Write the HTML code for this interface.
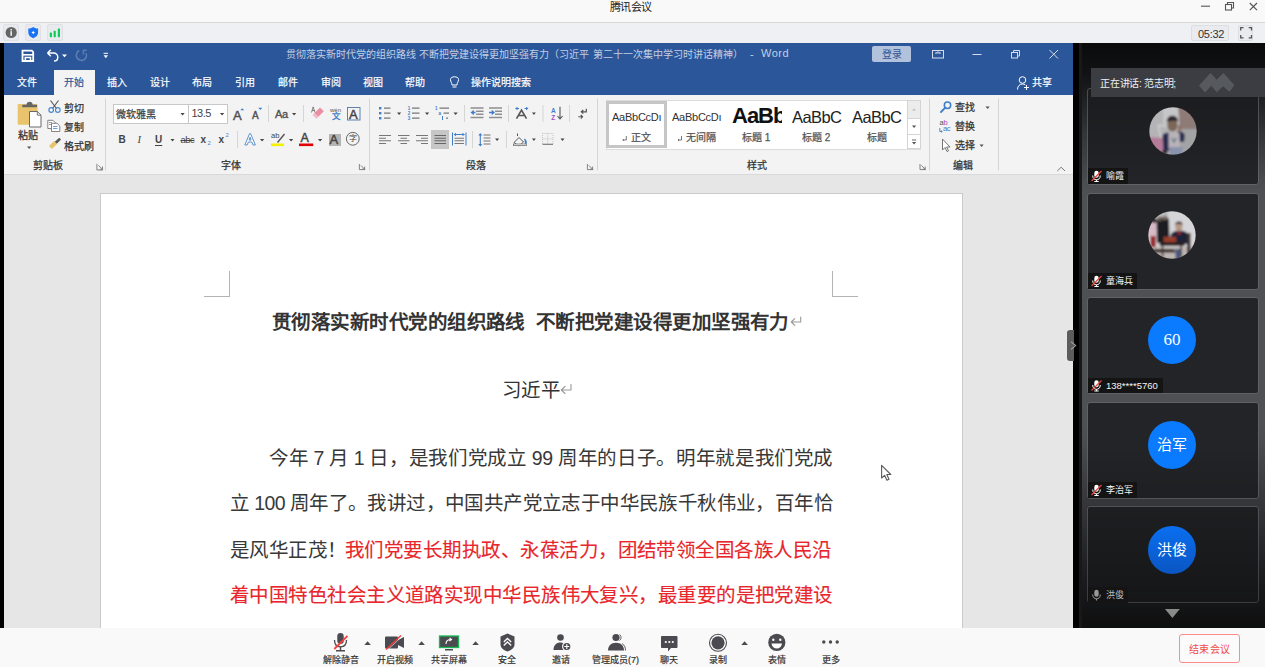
<!DOCTYPE html>
<html lang="zh-CN"><head><meta charset="utf-8">
<style>
*{margin:0;padding:0;box-sizing:border-box}
html,body{width:1265px;height:667px;overflow:hidden;background:#f9f9f9;font-family:"Liberation Sans",sans-serif;position:relative}
.a{position:absolute}
.t{position:absolute;white-space:nowrap;line-height:1}
svg{position:absolute;overflow:visible}
.ln{font-size:19.5px;line-height:1;color:#383838;white-space:nowrap;}
.red{color:#e8262b;-webkit-text-stroke:0.12px #e8262b}
.wt{top:50px;font-size:10px;color:#c3cfe3}
.rt{font-size:10px;color:#333;-webkit-text-stroke:0.25px currentColor}
.tile{position:absolute;left:1087px;width:172px;height:97px;background:#232427;border:1px solid #606266;border-radius:3px}
.av{position:absolute;left:1148px;width:48px;height:48px;border-radius:50%;color:#fff;font-size:15px;text-align:center;line-height:48px}
.nb{position:absolute;left:1087.5px;height:15.5px;background:#141415}
.nb span{position:absolute;left:18.5px;top:4px;font-size:9px;line-height:1;color:#f5f5f5;white-space:nowrap}
.bl{position:absolute;top:655.5px;font-size:9px;line-height:1;color:#333;white-space:nowrap;-webkit-text-stroke:0.2px currentColor}
.tab{top:78px;font-size:10px;color:#fff;-webkit-text-stroke:0.2px currentColor}
</style></head><body>
<!-- title bar -->
<div class="a" style="left:0;top:0;width:1265px;height:22px;background:#f9f9f9"></div>
<div class="t" style="left:610px;top:2px;font-size:11px;color:#222;letter-spacing:-0.6px">腾讯会议</div>
<div class="a" style="left:0;top:22px;width:1265px;height:1px;background:#d6d6d6"></div>
<!-- info strip -->
<div class="a" id="strip" style="left:0;top:23px;width:1265px;height:20px;background:#eef0f3"></div>

<!-- word window -->
<div class="a" style="left:0;top:43px;width:4px;height:585px;background:#000"></div>
<div class="a" id="wtitle" style="left:4px;top:43px;width:1069px;height:52px;background:#2b579a"></div>
<div class="a" id="ribbon" style="left:4px;top:95px;width:1069px;height:79px;background:#f3f3f3"></div>
<div class="a" style="left:4px;top:174px;width:1069px;height:1px;background:#d9d9d9"></div>
<div class="a" id="docarea" style="left:4px;top:175px;width:1069px;height:453px;background:#e6e6e6"></div>
<div class="a" id="page" style="left:100px;top:193px;width:863px;height:435px;background:#fff;border:1px solid #cacaca;border-bottom:none"></div>



<!-- title bar controls -->
<svg style="left:0;top:0" width="1" height="1"><g fill="none" stroke="#555" stroke-width="1.1">
<path d="M1201 6.2 H1210"/>
<rect x="1225.5" y="4.5" width="6" height="5.5"/><path d="M1227.5 4.5 V2.5 H1233.5 V8 H1231.5"/>
<path d="M1249.8 3 L1257 10.2 M1257 3 L1249.8 10.2" stroke-width="1.2"/>
</g></svg>
<!-- strip -->
<div class="a" style="left:3px;top:24px;width:16px;height:17px;background:#e8eaee;border:1px solid #dfe1e5;border-radius:2px"></div>
<div class="a" style="left:25px;top:24px;width:16px;height:17px;background:#e8eaee;border:1px solid #dfe1e5;border-radius:2px"></div>
<div class="a" style="left:47px;top:24px;width:16px;height:17px;background:#e8eaee;border:1px solid #dfe1e5;border-radius:2px"></div>
<svg style="left:0;top:0" width="1" height="1">
<circle cx="11.2" cy="32.5" r="5.6" fill="#656565"/><rect x="10.4" y="29" width="1.6" height="1.5" fill="#e8eaee"/><rect x="10.4" y="31.2" width="1.6" height="4.6" fill="#e8eaee"/>
<path d="M33.2 27 C31.5 28.2 30 28.5 28.3 28.6 V32.5 C28.3 35.5 30.8 37.3 33.2 38.2 C35.6 37.3 38.1 35.5 38.1 32.5 V28.6 C36.4 28.5 34.9 28.2 33.2 27Z" fill="#1a73f5"/>
<path d="M33.2 30.8 L34.2 32.6 L33.2 34.4 L32.2 32.6Z M31.4 32.6 L33.2 31.6 L35 32.6 L33.2 33.6Z" fill="#fff"/>
<rect x="49.8" y="32.6" width="2.2" height="4.6" rx="0.6" fill="#0bcf5a"/><rect x="53.6" y="30.8" width="2.2" height="6.4" rx="0.6" fill="#0bcf5a"/><rect x="57.8" y="28.4" width="2.2" height="8.8" rx="0.6" fill="#0bcf5a"/>
</svg>
<div class="a" style="left:1191px;top:25px;width:38px;height:16px;background:#e9ebef;border:1px solid #dcdee2;border-radius:2px"></div>
<div class="t" style="left:1198px;top:28.5px;font-size:11px;color:#333;letter-spacing:-0.3px">05:32</div>
<div class="a" style="left:1238px;top:25px;width:15px;height:16px;background:#e9ebef;border:1px solid #dcdee2;border-radius:2px"></div>
<svg style="left:0;top:0" width="1" height="1"><g fill="none" stroke="#555" stroke-width="1.3">
<path d="M1240.7 30.5 V27.7 H1243.5 M1248.7 27.7 H1251.5 V30.5 M1251.5 35 V37.8 H1248.7 M1243.5 37.8 H1240.7 V35"/></g></svg>

<!-- word title bar -->
<svg style="left:0;top:0" width="1" height="1">
<g fill="none" stroke="#fff" stroke-width="1.4">
<path d="M22.5 50.7 H31.8 L33.2 52.1 V61 H22.5Z" stroke-width="1.8"/><path d="M22.5 54.8 H33.2" stroke-width="1.6"/><path d="M25.3 61 V57.6 H30.5 V61" stroke-width="1.5"/>
<path d="M47.5 53 L50.8 49.8 M47.5 53 L50.8 56.2 M47.5 53 H53.5 C56.2 53 57.8 55 57.8 57.2 C57.8 59.3 56.2 61 54 61"/>
</g>
<path d="M62 54.5 H67 L64.5 57.2Z" fill="#fff"/>
<g fill="none" stroke="#5b7db3" stroke-width="1.6"><path d="M79.3 50.6 A5.1 5.1 0 1 0 86.1 53.2"/><path d="M83.4 54.6 V50.3 H86.8" stroke-width="1.5"/></g>
<path d="M103.6 53.3 H108" stroke="#fff" stroke-width="1"/><path d="M103.6 55.3 H108 L105.8 58.2Z" fill="#fff"/>
</svg>
<div class="t wt" style="left:286px">贯彻落实新时代党的组织路线</div><div class="t wt" style="left:419px">不断把党建设得更加坚强有力（习近平</div><div class="t wt" style="left:593px">第二十一次集中学习时讲话精神）</div><div class="t wt" style="left:750px;font-size:11px;top:49px">-</div><div class="t wt" style="left:761px;font-size:11px;top:48px;letter-spacing:0.5px">Word</div>
<div class="a" style="left:872px;top:46px;width:39px;height:16px;background:#b2c2dc;border-radius:2px"></div>
<div class="t" style="left:881.5px;top:50px;font-size:10px;color:#2f5597">登录</div>
<svg style="left:0;top:0" width="1" height="1"><g fill="none" stroke="#d5ddea" stroke-width="1">
<rect x="932.5" y="50.5" width="11" height="7.5"/><path d="M935 53 H941 M938 51.5 L936 53.5 M938 51.5 L940 53.5" stroke-width="0.9"/>
<path d="M972.5 54.5 H981.5"/>
<rect x="1011.5" y="52.5" width="6" height="5.5"/><path d="M1013.5 52.5 V50.5 H1019.5 V56 H1017.5"/>
<path d="M1049.5 50 L1058 58.5 M1058 50 L1049.5 58.5"/>
</g></svg>
<!-- tabs -->
<div class="a" style="left:54px;top:70px;width:41px;height:25px;background:#f3f3f3"></div>
<div class="t tab" style="left:17px">文件</div>
<div class="t tab" style="left:64px;color:#2b579a">开始</div>
<div class="t tab" style="left:107px">插入</div>
<div class="t tab" style="left:150px">设计</div>
<div class="t tab" style="left:192px">布局</div>
<div class="t tab" style="left:234.5px">引用</div>
<div class="t tab" style="left:277.5px">邮件</div>
<div class="t tab" style="left:320.5px">审阅</div>
<div class="t tab" style="left:362.5px">视图</div>
<div class="t tab" style="left:405px">帮助</div>
<div class="t tab" style="left:471px">操作说明搜索</div>
<svg style="left:0;top:0" width="1" height="1"><g fill="none" stroke="#fff" stroke-width="1">
<path d="M452 85 C452 82.5 450.5 82 450.5 79.5 C450.5 77.5 452.5 76.8 454.5 76.8 C456.5 76.8 458.5 77.5 458.5 79.5 C458.5 82 457 82.5 457 85Z"/><path d="M452.5 87 H456.5"/>
<circle cx="1022.5" cy="80" r="3.3"/><path d="M1017.5 89.5 C1017.5 86 1019.8 84 1022.5 84 C1023.5 84 1024.5 84.3 1025.3 84.8"/><path d="M1026.5 85 V90 M1024 87.5 H1029"/>
</g></svg>
<div class="t tab" style="left:1032px">共享</div>


<!-- ribbon: clipboard -->
<svg style="left:0;top:0" width="1" height="1">
<rect x="17.7" y="104" width="19.8" height="20.7" rx="1" fill="#eac46c"/>
<path d="M22.3 107.3 V104.8 H26.5 C26.5 102.4 28.7 101.8 29.6 101.8 C30.5 101.8 32.7 102.4 32.7 104.8 H37 V107.3Z" fill="#656565"/>
<path d="M29.5 111.5 H37.3 L41 115.2 V127 H29.5Z" fill="#fff" stroke="#6a6a6a" stroke-width="1"/><path d="M37.3 111.5 V115.2 H41" fill="none" stroke="#6a6a6a" stroke-width="0.9"/>
<path d="M27 146.5 H31.3 L29.15 149Z" fill="#555"/>
<g fill="none" stroke="#555" stroke-width="1.1"><path d="M50.5 100.5 L56.5 108.5 M58.5 100.5 L52.5 108.5"/></g>
<g fill="none" stroke="#4a8ad0" stroke-width="1.2"><circle cx="51.2" cy="110" r="2.3"/><circle cx="57.8" cy="110" r="2.3"/></g>
<g fill="#fff" stroke="#777" stroke-width="0.9"><path d="M47.8 120.3 H53 L55 122.3 V128.5 H47.8Z"/><path d="M51.5 123.3 H57 L59.8 126 V131.5 H51.5Z"/></g>
<path d="M53 126.5 H57.5 M53 128.5 H57.5" stroke="#4a8ad0" stroke-width="0.8"/><path d="M49 122.5 H52 M49 124.5 H52" stroke="#777" stroke-width="0.7"/>
<path d="M49 146 L54 141 L57 144 L52 149Z" fill="#eac46c"/><path d="M54.8 141.8 L59.2 137.8 L61 139.5 L56.8 143.7Z" fill="#555"/>
<path d="M96.9 163.8 V170 H103 M98.5 165.3 L102.5 169.3 M102.5 166.5 V169.3 H99.7" fill="none" stroke="#777" stroke-width="0.9"/>
<path d="M105.5 98.5 V170.5" stroke="#d5d5d5" stroke-width="1"/>
</svg>
<div class="t rt" style="left:17.5px;top:131px">粘贴</div>
<div class="t rt" style="left:64px;top:103.5px">剪切</div>
<div class="t rt" style="left:64px;top:122.5px">复制</div>
<div class="t rt" style="left:64px;top:141.5px">格式刷</div>
<div class="t rt" style="left:33px;top:160.5px">剪贴板</div>

<!-- ribbon: font -->
<div class="a" style="left:113px;top:104px;width:115px;height:20px;background:#fff;border:1px solid #c8c8c8"></div>
<div class="a" style="left:188px;top:104px;width:1px;height:20px;background:#c8c8c8"></div>
<div class="t rt" style="left:116px;top:109.5px;color:#444">微软雅黑</div>
<div class="t" style="left:191.5px;top:108px;font-size:11px;color:#444;letter-spacing:-0.5px">13.5</div>
<div class="t" style="left:118.5px;top:134.5px;font-size:10px;font-weight:bold;color:#444">B</div>
<div class="t" style="left:137.5px;top:134.5px;font-size:10.5px;color:#444;font-family:'Liberation Serif',serif;font-style:italic">I</div>
<div class="t" style="left:155px;top:134.5px;font-size:10px;font-weight:bold;color:#444;text-decoration:underline;text-underline-offset:1.5px">U</div>
<div class="t" style="left:180.5px;top:134.5px;font-size:9.5px;color:#444;text-decoration:line-through;letter-spacing:-0.5px">abc</div>
<div class="t" style="left:200.5px;top:134.5px;font-size:10px;font-weight:bold;color:#444">x</div><div class="t" style="left:207.5px;top:140px;font-size:6px;color:#4a8ad0">2</div>
<div class="t" style="left:218.5px;top:134.5px;font-size:10px;font-weight:bold;color:#444">x</div><div class="t" style="left:225.5px;top:132px;font-size:6px;color:#4a8ad0">2</div>
<div class="t" style="left:233px;top:108.5px;font-size:13px;color:#505050;-webkit-text-stroke:0.45px #505050">A</div>
<div class="t" style="left:252px;top:111px;font-size:10px;color:#505050;-webkit-text-stroke:0.4px #505050">A</div>
<div class="t" style="left:275px;top:109px;font-size:11px;color:#505050;letter-spacing:-0.4px;-webkit-text-stroke:0.35px #505050">Aa</div>
<div class="t" style="left:349px;top:107.5px;font-size:13px;color:#444;-webkit-text-stroke:0.45px #444">A</div>
<svg style="left:0;top:0" width="1" height="1"><path d="M244.8 145 L249.6 133.6 H250.6 L255.4 145 H253 L251.8 142 H248.4 L247.2 145Z M249.1 140 H251.1 L250.1 137.2Z" fill="#fafcff" stroke="#5d93cf" stroke-width="1" stroke-linejoin="round"/></svg>
<div class="t" style="left:271px;top:132px;font-size:7.5px;color:#444">ab</div>
<div class="t" style="left:300.5px;top:132px;font-size:12.5px;color:#444;-webkit-text-stroke:0.45px #444">A</div>
<div class="a" style="left:328.5px;top:133.5px;width:12px;height:12px;background:#b4b4b4"></div>
<div class="t" style="left:329.5px;top:133px;font-size:13px;color:#444;-webkit-text-stroke:0.45px #444">A</div>
<div class="t" style="left:330px;top:106.5px;font-size:6px;color:#555">wén</div>
<div class="t" style="left:332px;top:112px;font-size:8.5px;color:#3d7cc9;-webkit-text-stroke:0.35px #3d7cc9">文</div>
<div class="t" style="left:348.5px;top:134.5px;font-size:8px;color:#444">字</div>
<svg style="left:0;top:0" width="1" height="1">
<g fill="#444"><path d="M180.5 113 H184.7 L182.6 115.5Z"/><path d="M220 113 H224.2 L222.1 115.5Z"/><path d="M292 113 H296.2 L294.1 115.5Z"/>
<path d="M170.5 139 H174.5 L172.5 141.5Z"/><path d="M260 139 H264.2 L262.1 141.5Z"/><path d="M289 139 H293.2 L291.1 141.5Z"/><path d="M318 139 H322.2 L320.1 141.5Z"/></g>
<path d="M240.3 110.3 L242.2 108.2 L244.2 110.3Z" fill="#3f7ec7"/><path d="M258.3 107.8 H262.3 L260.3 110Z" fill="#3f7ec7"/>
<path d="M268.5 105 V122 M303.5 105 V122 M237.5 131 V148" stroke="#d5d5d5" stroke-width="1"/>
<rect x="347.5" y="107.5" width="12.5" height="12.5" fill="none" stroke="#5e82aa" stroke-width="1"/>
<path d="M314.5 113 L320 107.5 L323.8 111.3 L318.3 116.8Z" fill="#ec8ea3"/><path d="M314.5 113 L318.3 116.8 L316.5 118.8 L312.6 115Z" fill="#f3b8c5"/>
<path d="M311.5 112.5 L313.2 106.8 L315 112.5 M312.2 110.5 H314.3" fill="none" stroke="#666" stroke-width="0.8"/>
<path d="M277.5 142.5 L284.5 134" stroke="#555" stroke-width="1.4"/>
<rect x="271" y="143.5" width="13" height="2.6" fill="#f3f000"/>
<rect x="299" y="143.5" width="14.2" height="2.6" fill="#e00000"/>
<circle cx="352.8" cy="138.8" r="6.4" fill="none" stroke="#555" stroke-width="0.9"/>
<path d="M359.4 164 V169.6 H365.2 M360.8 165.4 L364.6 169.2 M364.6 166.6 V169.2 H362" fill="none" stroke="#777" stroke-width="0.9"/>
<path d="M369.5 98.5 V170.5" stroke="#d5d5d5" stroke-width="1"/>
</svg>
<div class="t rt" style="left:221px;top:160.5px">字体</div>


<!-- ribbon: paragraph -->
<svg style="left:0;top:0" width="1" height="1">
<g fill="#3f7ec7"><rect x="379" y="107" width="2.4" height="2.4"/><rect x="379" y="112" width="2.4" height="2.4"/><rect x="379" y="117" width="2.4" height="2.4"/></g>
<g stroke="#777" stroke-width="1.2"><path d="M384 108.2 H390.5 M384 113.2 H390.5 M384 118.2 H390.5"/>
<path d="M412 108.2 H419.5 M412 113.2 H419.5 M412 118.2 H419.5"/>
<path d="M439.5 108.2 H449 M443.5 113.2 H449 M446 118.2 H448"/></g>
<g fill="#3f7ec7" font-size="4.5" font-family="Liberation Sans" font-weight="bold"><text x="407.8" y="110">1</text><text x="407.8" y="115">2</text><text x="407.8" y="120">3</text>
<text x="435" y="110">1</text><text x="438.5" y="115">a</text><rect x="442" y="116" width="1" height="4"/></g>
<g fill="#444"><path d="M397 112.5 H401.2 L399.1 115Z"/><path d="M425 112.5 H429.2 L427.1 115Z"/><path d="M453.5 112.5 H457.7 L455.6 115Z"/>
<path d="M532 112.5 H535.8 L533.9 115Z"/><path d="M495 138.5 H499.2 L497.1 141Z"/><path d="M532 138.5 H535.8 L533.9 141Z"/><path d="M560.5 138.5 H564.5 L562.5 141Z"/></g>
<g stroke="#d5d5d5" stroke-width="1"><path d="M464.5 105 V122 M508.5 105 V122 M543 105 V122 M569.6 105 V122 M472.5 131 V148 M506.5 131 V148"/></g>
<g stroke="#777" stroke-width="1.1">
<path d="M470.5 108 H483.5 M476 111.3 H483.5 M476 114.2 H483.5 M470.5 117.6 H483.5" stroke="#8f8f8f" stroke-width="1.5"/>
<path d="M489 108 H502 M495 111.3 H502 M495 114.2 H502 M489 117.6 H502" stroke="#8f8f8f" stroke-width="1.5"/>
<path d="M379 135.5 H391 M379 138.2 H386 M379 140.8 H391 M379 143.5 H386"/>
<path d="M398 135.5 H409.5 M400.5 138.2 H407 M398 140.8 H409.5 M400.5 143.5 H407"/>
<path d="M416 135.5 H428 M421 138.2 H428 M416 140.8 H428 M421 143.5 H428"/>
</g>
<rect x="431" y="130" width="18" height="19" fill="#c6c6c6"/>
<g stroke="#666" stroke-width="1.1"><path d="M434.5 135.5 H446 M434.5 138.2 H446 M434.5 140.8 H446 M434.5 143.5 H446"/></g>
<g stroke="#777" stroke-width="1.1"><path d="M454.5 138.2 H464 M454.5 140.8 H464 M454.5 143.5 H464"/></g>
<g stroke="#3f7ec7" stroke-width="1"><path d="M452.5 132.5 V145.5 M466 132.5 V145.5 M454 134.5 H464.5"/></g>
<path d="M453.8 134.5 L456 132.8 V136.2Z M464.7 134.5 L462.5 132.8 V136.2Z" fill="#3f7ec7"/>
<path d="M470.5 112.5 L473.8 109.8 V115.2Z M495 112.5 L491.7 109.8 V115.2Z" fill="#3f7ec7"/>
<path d="M473 112.5 H475.5 M489 112.5 H492.5" stroke="#3f7ec7" stroke-width="1.4"/>
<path d="M470.5 107.5 H483.5" stroke="none"/>
<!-- chinese layout A -->
<path d="M516.5 118.7 L521.5 110 L526.5 118.7 M518.5 115.5 H524.5" fill="none" stroke="#555" stroke-width="1.6"/>
<path d="M515 108.5 L517.5 106.8 V110.2Z M528.5 108.5 L526 106.8 V110.2Z" fill="#3f7ec7"/><path d="M517 108.5 H519 M524.5 108.5 H526.5" stroke="#3f7ec7" stroke-width="1"/>
<!-- sort -->
<text x="551" y="112.5" font-size="6.5" font-family="Liberation Sans" fill="#3f7ec7" font-weight="bold">A</text>
<text x="551.3" y="119.8" font-size="6.5" font-family="Liberation Sans" fill="#a14fc4" font-weight="bold">Z</text>
<path d="M560 106.8 V118.5 M557.5 116 L560 119 L562.5 116" fill="none" stroke="#555" stroke-width="1.1"/>
<!-- show marks -->
<path d="M586.3 108.8 V111.8 H581.5 M583.3 110 L581.3 111.8 L583.3 113.6" fill="none" stroke="#555" stroke-width="1.2"/>
<path d="M578.3 116.8 H582.5 M580.8 115 L582.6 116.8 L580.8 118.6" fill="none" stroke="#555" stroke-width="1.1"/>
<!-- line spacing -->
<g stroke="#777" stroke-width="1.1"><path d="M483.5 135 H490.5 M483.5 138 H490.5 M483.5 141 H490.5 M483.5 144 H490.5"/></g>
<path d="M480.3 134 V145.5" stroke="#3f7ec7" stroke-width="1.1"/><path d="M478.3 135.5 L480.3 133 L482.3 135.5Z M478.3 144 L480.3 146.5 L482.3 144Z" fill="#3f7ec7"/>
<!-- shading -->
<path d="M514 142.5 L519 137.5 L523.5 142 L519 146Z" fill="none" stroke="#555" stroke-width="1"/><path d="M517.5 136 V133.5" stroke="#555" stroke-width="1"/>
<path d="M524.5 139 C526.5 141 527 143 525 144.5" fill="#3f7ec7" stroke="#3f7ec7" stroke-width="1.2"/>
<rect x="513.5" y="144" width="13" height="1.6" fill="#fff" stroke="#777" stroke-width="0.8"/>
<!-- borders -->
<rect x="542.5" y="133.5" width="10.5" height="10.8" fill="none" stroke="#c2c2c2" stroke-width="1" stroke-dasharray="1 1"/>
<path d="M547.75 133.5 V144.3 M542.5 138.9 H553" stroke="#c2c2c2" stroke-width="1" stroke-dasharray="1 1"/>
<path d="M542.5 144.3 H553" stroke="#777" stroke-width="1.1"/>
<path d="M587.4 164 V169.6 H593.2 M588.8 165.4 L592.6 169.2 M592.6 166.6 V169.2 H590" fill="none" stroke="#777" stroke-width="0.9"/>
<path d="M597.5 98.5 V170.5" stroke="#d5d5d5" stroke-width="1"/>
</svg>
<div class="t rt" style="left:466px;top:160.5px">段落</div>

<!-- ribbon: styles -->
<div class="a" style="left:606px;top:100px;width:315px;height:49.5px;background:#fff;border:1px solid #dcdcdc"></div>
<div class="a" style="left:606px;top:101px;width:61px;height:47px;border:3px solid #c6c6c6"></div>
<div class="a" style="left:907px;top:100px;width:14px;height:49px;border:1px solid #d4d4d4;background:#fff"></div>
<div class="a" style="left:908px;top:101px;width:12px;height:17px;background:#ececec"></div>
<div class="a" style="left:907px;top:118px;width:14px;height:1px;background:#d4d4d4"></div>
<div class="a" style="left:907px;top:134px;width:14px;height:1px;background:#d4d4d4"></div>
<svg style="left:0;top:0" width="1" height="1">
<path d="M912 110.5 L914 108.5 L916 110.5Z" fill="#bbb"/><path d="M912 125.5 H916.2 L914.1 128Z" fill="#555"/>
<path d="M912 140 H916.2" stroke="#555" stroke-width="0.9"/><path d="M912 142 H916.2 L914.1 144.5Z" fill="#555"/>
<path d="M920 164 V169.6 H925.8 M921.4 165.4 L925.2 169.2 M925.2 166.6 V169.2 H922.6" fill="none" stroke="#777" stroke-width="0.9"/>
<path d="M929.5 98.5 V170.5" stroke="#d5d5d5" stroke-width="1"/>
</svg>
<div class="t" style="left:612px;top:112px;font-size:11px;color:#333;letter-spacing:-0.25px;width:49.5px;overflow:hidden">AaBbCcDı</div>
<div class="t" style="left:672px;top:112px;font-size:11px;color:#333;letter-spacing:-0.25px;width:49.5px;overflow:hidden">AaBbCcDı</div>
<div class="t" style="left:732px;top:105px;font-size:22px;color:#111;font-weight:bold;letter-spacing:-1px;width:49.5px;overflow:hidden">AaBb</div>
<div class="t" style="left:792px;top:109px;font-size:16.5px;color:#222;letter-spacing:-0.6px;width:49.5px;overflow:hidden">AaBbC</div>
<div class="t" style="left:852px;top:109px;font-size:16.5px;color:#222;letter-spacing:-0.6px;width:49.5px;overflow:hidden">AaBbC</div>
<div class="t rt" style="left:630.5px;top:132.5px;color:#555">正文</div>
<div class="t rt" style="left:685.5px;top:132.5px;color:#555">无间隔</div>
<div class="t rt" style="left:742px;top:132.5px;color:#555">标题 1</div>
<div class="t rt" style="left:802px;top:132.5px;color:#555">标题 2</div>
<div class="t rt" style="left:867px;top:132.5px;color:#555">标题</div>
<svg style="left:0;top:0" width="1" height="1"><g fill="none" stroke="#666" stroke-width="0.9">
<path d="M626.3 136 V140 H622.8 M623.8 139 L622.8 140 L623.8 141"/>
<path d="M681.5 136 V140 H678 M679 139 L678 140 L679 141"/></g></svg>
<div class="t rt" style="left:747px;top:160.5px">样式</div>

<!-- ribbon: editing -->
<svg style="left:0;top:0" width="1" height="1">
<circle cx="947.5" cy="105.3" r="3.2" fill="none" stroke="#3f7ec7" stroke-width="1.5"/><path d="M945.3 107.6 L941 112" stroke="#3f7ec7" stroke-width="1.8" stroke-linecap="round"/>
<path d="M985.5 106.5 H989.7 L987.6 109Z M979.5 144.5 H983.7 L981.6 147Z" fill="#555"/>
<path d="M942.5 139 V150 L945 147.5 L947 151.5 L948.5 150.8 L946.6 147 H950Z" fill="#fff" stroke="#666" stroke-width="0.9" stroke-linejoin="round"/>
<path d="M939.8 128 V131.5 H942" fill="none" stroke="#3f7ec7" stroke-width="0.9"/><path d="M941 130.5 L942.3 131.5 L941 132.5" fill="none" stroke="#3f7ec7" stroke-width="0.8"/>
<path d="M998.5 98.5 V170.5" stroke="#d5d5d5" stroke-width="1"/>
<path d="M1057.3 171 L1061.2 167.2 L1065 171" fill="none" stroke="#777" stroke-width="1"/>
</svg>
<div class="t" style="left:939.5px;top:118.5px;font-size:7.5px;color:#555;letter-spacing:-0.3px">a<span style="color:#a14fc4">b</span></div>
<div class="t" style="left:943px;top:125px;font-size:7.5px;color:#3f7ec7;letter-spacing:-0.3px">ac</div>
<div class="t rt" style="left:955px;top:102.5px">查找</div>
<div class="t rt" style="left:955px;top:121.5px">替换</div>
<div class="t rt" style="left:955px;top:140.5px">选择</div>
<div class="t rt" style="left:953px;top:160.5px">编辑</div>

<!-- page content -->
<div class="a" style="left:229px;top:271px;width:1px;height:26px;background:#b4b4b4"></div>
<div class="a" style="left:204px;top:296px;width:26px;height:1px;background:#b4b4b4"></div>
<div class="a" style="left:832px;top:271px;width:1px;height:26px;background:#b4b4b4"></div>
<div class="a" style="left:832px;top:296px;width:26px;height:1px;background:#b4b4b4"></div>
<div class="t" id="dtitle" style="left:272px;top:313px;font-size:19.5px;font-weight:bold;color:#333;letter-spacing:-0.55px">贯彻落实新时代党的组织路线</div><div class="t" id="dtitle2" style="left:536px;top:313px;font-size:19.5px;font-weight:bold;color:#333;letter-spacing:-0.55px">不断把党建设得更加坚强有力</div>
<div class="t" id="dauth" style="left:502px;top:381px;font-size:19.5px;color:#333;letter-spacing:-0.55px">习近平</div>
<div class="a ln" id="l1" style="left:269px;top:449px;letter-spacing:-0.335px">今年 7 月 1 日，是我们党成立 99 周年的日子。明年就是我们党成</div>
<div class="a ln" id="l2" style="left:230px;top:494px;letter-spacing:-0.597px">立 100 周年了。我讲过，中国共产党立志于中华民族千秋伟业，百年恰</div>
<div class="a ln" id="l3" style="left:230px;top:541px;letter-spacing:-0.567px">是风华正茂！</div><div class="a ln red" id="l3r" style="left:345px;top:541px;letter-spacing:-0.533px">我们党要长期执政、永葆活力，团结带领全国各族人民沿</div>
<div class="a ln red" id="l4" style="left:230px;top:586px;letter-spacing:-0.557px">着中国特色社会主义道路实现中华民族伟大复兴，最重要的是把党建设</div>

<svg style="left:0;top:0" width="1" height="1"><g fill="none" stroke="#9a9a9a" stroke-width="1.1" stroke-linecap="round" stroke-linejoin="round">
<path d="M800.7 317 V322 H791.5 M794.8 318.6 L791.3 322 L794.8 325.4"/>
<path d="M571 384.2 V390 H561.5 M565 386.5 L561.3 390 L565 393.5"/></g></svg>
<svg style="left:0;top:0" width="1" height="1"><path d="M881.6 465.3 V478 L884.6 475.3 L886.9 480.2 L889 479.2 L886.8 474.5 H890.8Z" fill="#fff" stroke="#5a5a5a" stroke-width="1.1" stroke-linejoin="round"/></svg>
<!-- sidebar -->
<div class="a" style="left:1073px;top:43px;width:6px;height:585px;background:#000"></div><div class="a" style="left:1079px;top:43px;width:3px;height:585px;background:#18181a"></div>
<div class="a" id="side" style="left:1082px;top:43px;width:184px;height:585px;background:#3a3b3f"></div>


<!-- sidebar content -->
<div class="a" style="left:1082px;top:43px;width:183px;height:585px;background:linear-gradient(#0f1011 0px,#18191b 30px,#3a3c40 90px,#4e5054 150px,#4e5054 380px,#3a3b3f 480px,#1a1b1c 585px)"></div>
<div class="tile" style="top:88px"></div>
<div class="tile" style="top:192.5px"></div>
<div class="tile" style="top:297px"></div>
<div class="tile" style="top:401.5px"></div>
<div class="tile" style="top:506px"></div>
<!-- vignette overlay -->
<div class="a" style="left:1082px;top:43px;width:183px;height:585px;background:linear-gradient(rgba(0,0,0,0.35) 0px,rgba(0,0,0,0) 140px,rgba(0,0,0,0) 400px,rgba(0,0,0,0.45) 585px)"></div>
<!-- avatars -->
<svg style="left:1148.5px;top:107.2px" width="48" height="48" viewBox="0 0 48 48"><defs><clipPath id="cc"><circle cx="24" cy="24" r="23.7"/></clipPath><filter id="bl" x="-10%" y="-10%" width="120%" height="120%"><feGaussianBlur stdDeviation="1"/></filter></defs>
<g clip-path="url(#cc)"><g filter="url(#bl)">
<rect x="-2" y="-2" width="52" height="52" fill="#b4b4b6"/>
<rect x="14" y="-2" width="16" height="20" fill="#c6c6c8"/>
<path d="M29 -2 H50 V24 H31Z" fill="#8e7a76"/>
<path d="M31 22 H50 V50 H31Z" fill="#a3a3a5"/>
<path d="M9 18 L12.5 33 M9 18 L19 20 M12.5 33 L18 33" stroke="#dcdcdc" stroke-width="1.1" fill="none"/>
<path d="M-2 30 L14.5 31 L16 50 H-2Z" fill="#b47c98"/>
<path d="M13.5 28 C15 26 18 25.5 20 25.8 L20.5 43.5 L14.5 44Z" fill="#272a4e"/>
<path d="M28.5 24 C31 23.5 34.5 25 35.8 28 L35 35 L30.5 35Z" fill="#272a4e"/>
<path d="M19.5 26 H30.5 L31 41.5 H19.5Z" fill="#b9b2ba"/>
<path d="M23 31 L25 35 L27 31" stroke="#4a6a70" stroke-width="1.2" fill="none"/>
<path d="M20.5 40 H33.5 V50 H20.5Z" fill="#8a93ad"/>
<rect x="13.5" y="43" width="5" height="4" fill="#2a2a38"/>
<ellipse cx="23.5" cy="18.3" rx="5.2" ry="6.2" fill="#7c6657"/>
<path d="M17.8 15.5 C17.8 10.5 20.5 8.8 23.5 8.8 C27 8.8 29.2 11 29 15 C27 13.2 21 13 17.8 15.5Z" fill="#29262a"/>
<path d="M28.7 25.5 L29.5 18.5 L31.8 18.2 L32 25Z" fill="#8a7062"/>
</g></g></svg>
<svg style="left:1148.3px;top:211.4px" width="48" height="48" viewBox="0 0 48 48"><defs><clipPath id="cc2"><circle cx="24" cy="24" r="23.7"/></clipPath></defs>
<g clip-path="url(#cc2)"><g filter="url(#bl)">
<rect x="-2" y="-2" width="52" height="52" fill="#d6d6d8"/>
<rect x="-2" y="-2" width="22" height="20" fill="#b9b9bb"/>
<rect x="-2" y="36" width="52" height="14" fill="#bdb5b0"/>
<path d="M0.8 12 C2 9.5 7 9 8.6 11.5 L8.6 25.7 H0.8Z" fill="#d8bac6"/>
<rect x="2.4" y="25" width="5.4" height="11" fill="#9a2a30"/>
<circle cx="6" cy="9.5" r="2.6" fill="#2a2224"/>
<path d="M8.6 9 C10 6.5 18 5.5 21 8 L21.5 32 H9Z" fill="#1e1e24"/>
<circle cx="12" cy="8" r="2.3" fill="#6a5a52"/><circle cx="17" cy="7" r="2.3" fill="#7a6a60"/>
<path d="M22.6 24 C24 20.5 28 19.4 32 19.4 C37 19.6 40 21.5 41.3 26 L41.3 33 H22.6Z" fill="#1b2039"/>
<rect x="29.5" y="20.5" width="3.5" height="3" fill="#a02428"/>
<ellipse cx="30.8" cy="15.6" rx="3.6" ry="4.4" fill="#b69884"/>
<path d="M27 13.5 C27.5 11 30 10.5 31.5 10.6 C33.5 10.8 34.6 12 34.4 14 C33 12.6 29 12.4 27 13.5Z" fill="#2a2224"/>
<rect x="15.6" y="25.7" width="12.5" height="7" fill="#9a3c2c"/>
<rect x="11.7" y="31.1" width="25" height="3.9" fill="#2e2222"/>
<path d="M14.5 35 V46 M33 35 V46" stroke="#2e2222" stroke-width="1.5"/>
<rect x="39" y="22" width="3.5" height="21" fill="#3a2e2c"/>
<path d="M4 38 H26 L28 41.5 H6Z" fill="#3e2e2e"/>
<rect x="27.5" y="38" width="5" height="10" fill="#4a5a80"/>
</g></g></svg>
<div class="av" style="top:316px;background:#0a7bff;font-family:'Liberation Serif',serif;font-size:17px">60</div>
<div class="av" style="top:421px;background:#0a7bff">治军</div>
<div class="av" style="top:526px;background:linear-gradient(#0a6ff0,#0a55c2)">洪俊</div>
<!-- name bars -->
<div class="nb" style="top:168px;width:40px"><span>喻霞</span></div>
<div class="nb" style="top:273px;width:49px"><span>童海兵</span></div>
<div class="nb" style="top:377.5px;width:75px"><span style="font-size:9.5px;top:3.5px">138****5760</span></div>
<div class="nb" style="top:482px;width:49px"><span>李治军</span></div>
<div class="nb" style="top:587px;width:40px"><span style="color:#bbb">洪俊</span></div>
<svg style="left:0;top:0" width="1" height="1">

<g transform="translate(1096.5 176)"><rect x="-2.2" y="-5.2" width="4.4" height="7" rx="2.2" fill="#fff"/><path d="M-3.8 -0.5 C-3.8 2.5 -2 3.8 0 3.8 C2 3.8 3.8 2.5 3.8 -0.5 M0 3.8 V5.5 M-2.2 5.5 H2.2" fill="none" stroke="#fff" stroke-width="1"/><path d="M-5 5 L5 -5" stroke="#e8453c" stroke-width="1.3"/></g><g transform="translate(1096.5 281)"><rect x="-2.2" y="-5.2" width="4.4" height="7" rx="2.2" fill="#fff"/><path d="M-3.8 -0.5 C-3.8 2.5 -2 3.8 0 3.8 C2 3.8 3.8 2.5 3.8 -0.5 M0 3.8 V5.5 M-2.2 5.5 H2.2" fill="none" stroke="#fff" stroke-width="1"/><path d="M-5 5 L5 -5" stroke="#e8453c" stroke-width="1.3"/></g><g transform="translate(1096.5 385.5)"><rect x="-2.2" y="-5.2" width="4.4" height="7" rx="2.2" fill="#fff"/><path d="M-3.8 -0.5 C-3.8 2.5 -2 3.8 0 3.8 C2 3.8 3.8 2.5 3.8 -0.5 M0 3.8 V5.5 M-2.2 5.5 H2.2" fill="none" stroke="#fff" stroke-width="1"/><path d="M-5 5 L5 -5" stroke="#e8453c" stroke-width="1.3"/></g><g transform="translate(1096.5 490)"><rect x="-2.2" y="-5.2" width="4.4" height="7" rx="2.2" fill="#fff"/><path d="M-3.8 -0.5 C-3.8 2.5 -2 3.8 0 3.8 C2 3.8 3.8 2.5 3.8 -0.5 M0 3.8 V5.5 M-2.2 5.5 H2.2" fill="none" stroke="#fff" stroke-width="1"/><path d="M-5 5 L5 -5" stroke="#e8453c" stroke-width="1.3"/></g>
<g transform="translate(1096.5 595)"><rect x="-2.2" y="-5.2" width="4.4" height="7" rx="2.2" fill="#999"/><path d="M-3.8 -0.5 C-3.8 2.5 -2 3.8 0 3.8 C2 3.8 3.8 2.5 3.8 -0.5 M0 3.8 V5.5" fill="none" stroke="#999" stroke-width="1"/></g>
<path d="M1165 609 H1179.8 L1172.4 618Z" fill="#8a8a8a"/>
</svg>
<!-- speaking banner -->
<div class="a" style="left:1091px;top:68px;width:174px;height:28.5px;background:#3b3d42"></div>
<div class="t" style="left:1100px;top:79px;font-size:10px;color:#f0f0f0;letter-spacing:-0.25px">正在讲话: 范志明;</div>
<svg style="left:0;top:0" width="1" height="1"><g fill="#56595d" stroke="#56595d" stroke-width="1" stroke-linejoin="round"><path d="M1199.5 85.5 L1210.5 73.5 L1216.3 79.8 L1205 92Z"/><path d="M1211.5 85.5 L1223.5 73.5 L1233.8 85 L1229.5 91.3 L1223 85.8 L1216.8 91.8Z"/></g></svg>
<!-- collapse handle -->
<div class="a" style="left:1067px;top:330px;width:7px;height:31px;background:#5c5c5c;border-radius:3px 0 0 3px"></div>
<svg style="left:0;top:0" width="1" height="1"><path d="M1071 341.8 L1075.6 345.6 L1071 349.5" fill="none" stroke="#9a9a9a" stroke-width="1.2"/></svg>

<!-- bottom toolbar -->
<div class="a" id="bottom" style="left:0;top:628px;width:1265px;height:39px;background:#f9f9f9"></div>

<!-- bottom toolbar content -->
<svg style="left:0;top:0" width="1" height="1">
<g fill="#4a4a50">
<!-- mic muted -->
<rect x="337.3" y="633" width="6.4" height="11" rx="3.2"/>
<path d="M334.5 640 C334.5 644.5 337 646.8 340.5 646.8 C344 646.8 346.5 644.5 346.5 640" fill="none" stroke="#4a4a50" stroke-width="1.3"/>
<rect x="339.8" y="646.5" width="1.4" height="3.5"/><rect x="336" y="650" width="9" height="1.5"/>
<!-- video muted -->
<rect x="385" y="636.5" width="13" height="12" rx="1"/><path d="M398 640 L404 637 V648 L398 645Z"/>
<!-- triangles -->
<path d="M364.3 645 L367.6 641.3 L370.9 645Z"/><path d="M418.3 645 L421.6 641.3 L424.9 645Z"/><path d="M472.3 645 L475.6 641.3 L478.9 645Z"/><path d="M741.3 645 L744.6 641.3 L747.9 645Z"/>
<!-- share -->
<rect x="439.5" y="636" width="19" height="11.5" fill="#4a4a50" stroke="#19b955" stroke-width="1.3"/>
<rect x="445" y="649" width="8" height="1.5"/>
<!-- shield -->
<path d="M507.5 633.5 L514.5 636.5 V644.5 C514.5 648 511 650.5 507.5 651.5 C504 650.5 500.5 648 500.5 644.5 V636.5Z"/>
<!-- invite -->
<circle cx="560.5" cy="637.5" r="3.3"/><path d="M553.5 650 C553.5 645 556.5 642.5 560.5 642.5 C563 642.5 564.5 643.5 565.5 645 L565.5 650Z"/>
<circle cx="566.8" cy="646.5" r="4.2" stroke="#f9f9f9" stroke-width="1.2"/>
<!-- members -->
<circle cx="616" cy="637.5" r="3.6"/><path d="M608 650.5 C608 645.5 611.5 642.8 616 642.8 C620.5 642.8 624 645.5 624 650.5Z"/>
<path d="M619.5 634.5 C621.5 635.5 621.5 639.5 619.5 640.5 M622 643.5 C624.5 645 625.5 647.5 625.5 650.5" fill="none" stroke="#4a4a50" stroke-width="0.9"/>
<!-- chat -->
<path d="M662 636 H676.5 C677 636 677.5 636.5 677.5 637 V647 C677.5 647.5 677 648 676.5 648 H671 L668 651.5 V648 H662 C661.5 648 661 647.5 661 647 V637 C661 636.5 661.5 636 662 636Z"/>
<!-- record -->
<circle cx="718" cy="642.8" r="8.5" fill="none" stroke="#4a4a50" stroke-width="1.1"/><circle cx="718" cy="642.8" r="6.6"/>
<!-- emoji -->
<circle cx="776.8" cy="642.4" r="8.6"/>
<!-- more -->
<circle cx="823.8" cy="642" r="1.7"/><circle cx="830.5" cy="642" r="1.7"/><circle cx="837.2" cy="642" r="1.7"/>
</g>
<path d="M334.3 649 L347.5 635.8" stroke="#fa3e3e" stroke-width="1.8"/>
<path d="M386 649.5 L401 635.5" stroke="#ee3b3b" stroke-width="1.4"/><path d="M387.5 650 L402.5 636" stroke="#f9f9f9" stroke-width="0.6"/>
<path d="M446 644 C446 641 448 639.5 451 639.5 M449.5 638 L451.5 639.5 L449.5 641" fill="none" stroke="#fff" stroke-width="1.1"/>
<path d="M503.8 642 L507.5 638.5 L511.2 642 M503.8 645.5 L507.5 642 L511.2 645.5" fill="none" stroke="#fff" stroke-width="1.3"/>
<path d="M566.8 644 V649 M564.3 646.5 H569.3" stroke="#fff" stroke-width="1.1"/>
<circle cx="665.8" cy="642" r="1.1" fill="#fff"/><circle cx="669.3" cy="642" r="1.1" fill="#fff"/><circle cx="672.8" cy="642" r="1.1" fill="#fff"/>
<circle cx="773.3" cy="639.8" r="1.2" fill="#fff"/><circle cx="780.3" cy="639.8" r="1.2" fill="#fff"/>
<path d="M771.5 643.5 H782 C781.5 647 779.5 648.5 776.8 648.5 C774 648.5 772 647 771.5 643.5Z" fill="#fff"/>
</svg>
<div class="bl" style="left:323px">解除静音</div>
<div class="bl" style="left:377px">开启视频</div>
<div class="bl" style="left:431px">共享屏幕</div>
<div class="bl" style="left:498px">安全</div>
<div class="bl" style="left:552px">邀请</div>
<div class="bl" style="left:592px">管理成员(7)</div>
<div class="bl" style="left:660px">聊天</div>
<div class="bl" style="left:709px">录制</div>
<div class="bl" style="left:768px">表情</div>
<div class="bl" style="left:822px">更多</div>
<div class="a" style="left:1179px;top:634px;width:61px;height:29px;border:1px solid #ff8c8c;border-radius:3px;background:#fbfbfb"></div>
<div class="t" style="left:1189px;top:644.5px;font-size:10px;color:#f24848;letter-spacing:0.25px">结束会议</div>

</body></html>
